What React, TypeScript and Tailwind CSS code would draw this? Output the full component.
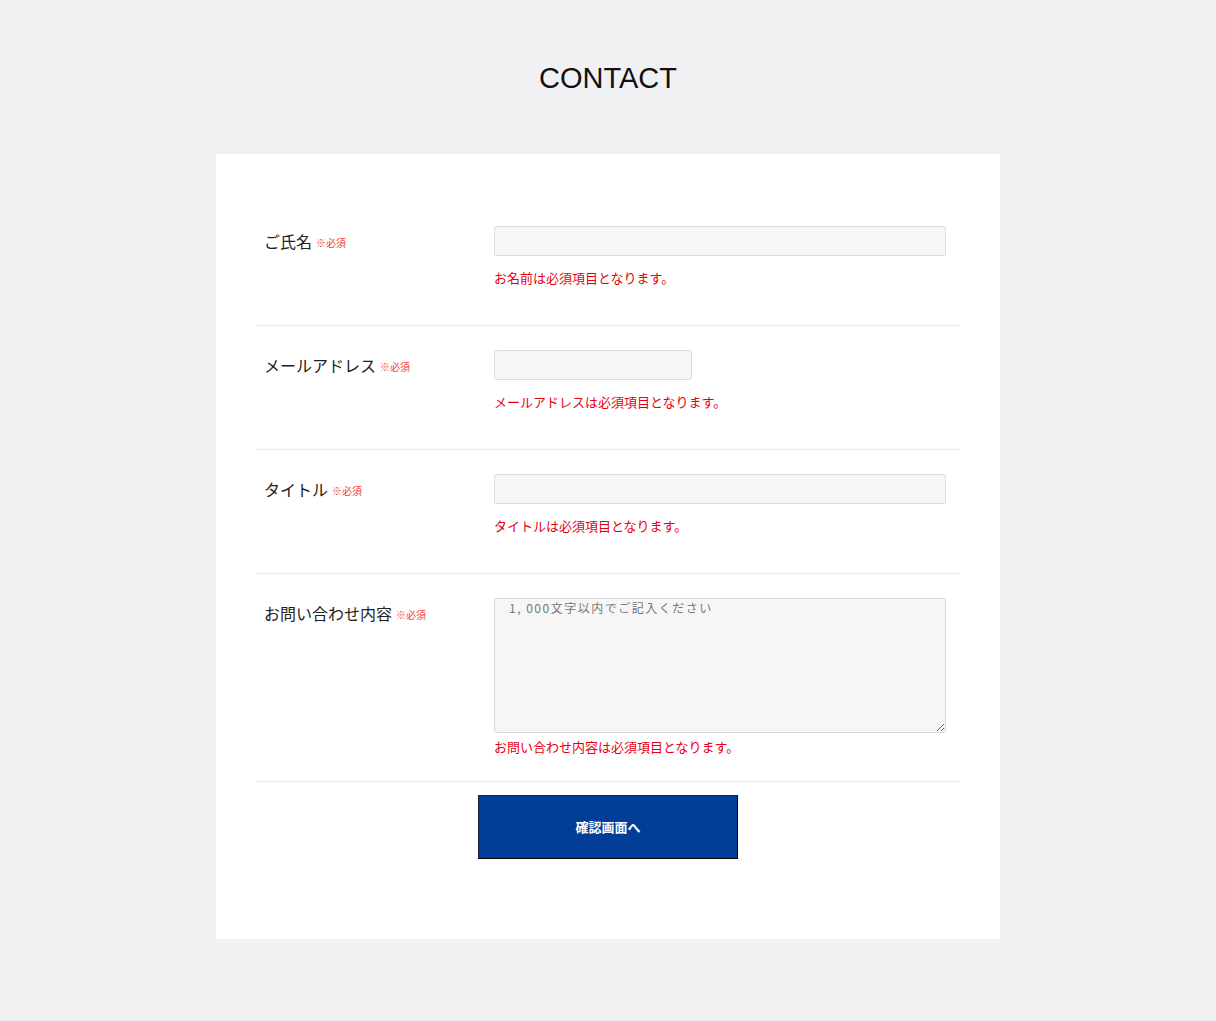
import React from "react";

const jp = { fontFamily: '"Noto Sans CJK JP", "Noto Sans", sans-serif' };

function Row({
  label,
  error,
  first,
  children,
  tall,
}: {
  label: string;
  error: string;
  first?: boolean;
  children: React.ReactNode;
  tall?: boolean;
}) {
  return (
    <div
      className={`flex ${first ? "h-[123px]" : "border-t border-[#ececec]"} ${
        tall ? "pt-[24px] pb-[24px]" : first ? "pt-[24px]" : "pt-[24px] h-[124px]"
      }`}
    >
      <div className="w-[238px] shrink-0 pl-[8px] h-[30px] flex items-center">
        <span className="text-[16px] text-[#222]">{label}</span>
        <span className="text-[10px] text-[#f04040] ml-[4px] mt-[3px]">※必須</span>
      </div>
      <div className="flex-1 pr-[14px]">
        {children}
        <div
          className={`text-[13px] leading-[20px] text-[#e60012] ${
            tall ? "mt-[4px]" : "mt-[12px]"
          }`}
        >
          {error}
        </div>
      </div>
    </div>
  );
}

export default function App() {
  return (
    <div className="min-h-[1021px] bg-[#f1f1f4]" style={jp}>
      <h1
        className="pt-[60px] text-center text-[29px] leading-[36px] text-[#111] mb-[58px]"
        style={{ fontFamily: '"Liberation Sans", Arial, sans-serif' }}
      >
        CONTACT
      </h1>
      <div className="mx-auto w-[784px] bg-white px-[40px] pt-[48px] pb-[80px]">
        <Row label="ご氏名" error="お名前は必須項目となります。" first>
          <input className="block w-full h-[30px] bg-[#f6f6f6] border border-[#dcdcdc] rounded-[3px] outline-none" />
        </Row>
        <Row label="メールアドレス" error="メールアドレスは必須項目となります。">
          <input className="block w-[198px] h-[30px] bg-[#f6f6f6] border border-[#dcdcdc] rounded-[3px] outline-none" />
        </Row>
        <Row label="タイトル" error="タイトルは必須項目となります。">
          <input className="block w-full h-[30px] bg-[#f6f6f6] border border-[#dcdcdc] rounded-[3px] outline-none" />
        </Row>
        <Row label="お問い合わせ内容" error="お問い合わせ内容は必須項目となります。" tall>
          <textarea
            className="block w-full h-[135px] bg-[#f6f6f6] border border-[#d6d6d6] rounded-[3px] outline-none px-[14px] pt-0 text-[12px] leading-[18px] tracking-[1.5px] text-[#555] placeholder:text-[#777]"
            placeholder="1, 000文字以内でご記入ください"
          />
        </Row>
        <div className="border-t border-[#ececec] pt-[13px] flex justify-center">
          <button className="w-[260px] h-[64px] bg-[#003e98] text-white text-[13px] font-bold border border-[#1a2540] border-b-black border-r-black">
            確認画面へ
          </button>
        </div>
      </div>
    </div>
  );
}
